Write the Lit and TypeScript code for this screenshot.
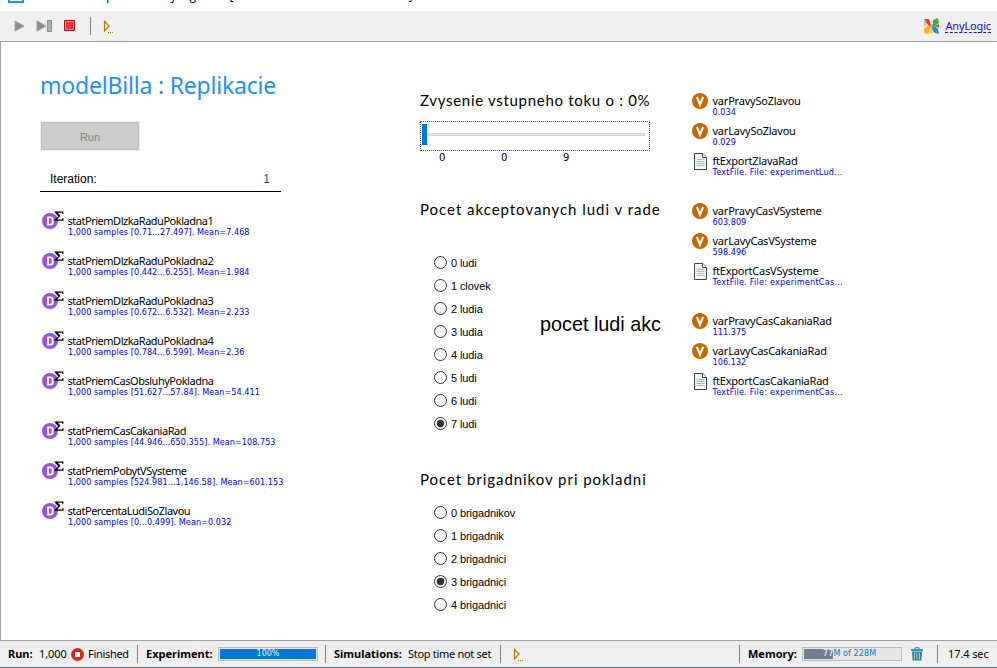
import { LitElement, html, svg, css } from "lit";
import { customElement, property } from "lit/decorators.js";

type Item = { kind: "stat" | "var" | "file"; name: string; value: string; gap?: boolean };

const STATS: Item[] = [
  { kind: "stat", name: "statPriemDlzkaRaduPokladna1", value: "1,000 samples [0.71...27.497]. Mean=7.468" },
  { kind: "stat", name: "statPriemDlzkaRaduPokladna2", value: "1,000 samples [0.442...6.255]. Mean=1.984" },
  { kind: "stat", name: "statPriemDlzkaRaduPokladna3", value: "1,000 samples [0.672...6.532]. Mean=2.233" },
  { kind: "stat", name: "statPriemDlzkaRaduPokladna4", value: "1,000 samples [0.784...6.599]. Mean=2.36" },
  { kind: "stat", name: "statPriemCasObsluhyPokladna", value: "1,000 samples [51.627...57.84]. Mean=54.411" },
  { kind: "stat", name: "statPriemCasCakaniaRad", value: "1,000 samples [44.946...650.355]. Mean=108.753", gap: true },
  { kind: "stat", name: "statPriemPobytVSysteme", value: "1,000 samples [524.981...1,146.58]. Mean=601.153" },
  { kind: "stat", name: "statPercentaLudiSoZlavou", value: "1,000 samples [0...0.499]. Mean=0.032" },
];

const VARS: Item[] = [
  { kind: "var", name: "varPravySoZlavou", value: "0.034" },
  { kind: "var", name: "varLavySoZlavou", value: "0.029" },
  { kind: "file", name: "ftExportZlavaRad", value: "TextFile. File: experimentLud..." },
  { kind: "var", name: "varPravyCasVSysteme", value: "603.809", gap: true },
  { kind: "var", name: "varLavyCasVSysteme", value: "598.496" },
  { kind: "file", name: "ftExportCasVSysteme", value: "TextFile. File: experimentCas..." },
  { kind: "var", name: "varPravyCasCakaniaRad", value: "111.375", gap: true },
  { kind: "var", name: "varLavyCasCakaniaRad", value: "106.132" },
  { kind: "file", name: "ftExportCasCakaniaRad", value: "TextFile. File: experimentCas..." },
];

const PEOPLE = ["0 ludi", "1 clovek", "2 ludia", "3 ludia", "4 ludia", "5 ludi", "6 ludi", "7 ludi"];
const HELPERS = ["0 brigadnikov", "1 brigadnik", "2 brigadnici", "3 brigadnici", "4 brigadnici"];

const consoleIcon = html`<svg width="11" height="13" viewBox="0 0 11 13">
  <path d="M1.5 1.3v9.4L6 6z" fill="#fff6d8" stroke="#b5761a" stroke-width="1.2" />
  <path d="M5 12.5h1M7 12.5h1M9 12.5h1" stroke="#b5761a" />
</svg>`;

const icons = {
  stat: svg`<circle cx="10" cy="13" r="8" fill="#9752e6"/>
    <path d="M7.9 9.4h2.5q2.3 0 2.3 2.3v2.6q0 2.3-2.3 2.3H7.9z" fill="none" stroke="#fff" stroke-width="1.9"/>
    <path d="M22.8 5.7V4.1H15.6l3.7 4-4 4h7.6v-1.8" fill="none" stroke="#000" stroke-width="1.3"/>
    <path d="M16 4.3l3.5 3.8" stroke="#000" stroke-width="2"/>`,
  var: svg`<circle cx="10" cy="13" r="8" fill="#cc6600"/>
    <path d="M6.9 8.9L10 16.6l3.1-7.7" fill="none" stroke="#fff" stroke-width="2.1"/>`,
  file: svg`<path d="M4.5 5.5h8.3l3.7 3.7v12.3h-12z" fill="#eef7fa" stroke="#3f464b"/>
    <path d="M12.5 5.5v4h4" fill="#fff" stroke="#3f464b"/>
    <path d="M6.5 11.5h8M6.5 13.5h8M6.5 15.5h8M6.5 17.5h8" stroke="#aebcc2"/>`,
};

@customElement("model-item")
class ModelItem extends LitElement {
  @property({ attribute: false }) item!: Item;
  static styles = css`
    :host { display: flex; font-family: "DejaVu Sans Condensed", "DejaVu Sans", sans-serif; font-stretch: condensed; white-space: nowrap; }
    svg { display: block; flex: none; width: 27px; height: 24px; }
    .var svg, .file svg { width: 22px; }
    .row { display: flex; }
    .text { padding: 6px 0 0 0.5px; }
    .name { font-family: "Noto Sans", sans-serif; font-size: 11px; line-height: 14px; color: #000; letter-spacing: -0.22px; }
    .stat .name { letter-spacing: -0.48px; }
    .value { font-size: 9px; line-height: 10px; margin-top: -1px; color: #0000ff; letter-spacing: 0.05px; }
    .stat .value { padding-left: 0.5px; }
    .file .value { letter-spacing: 0.24px; }
  `;
  render() {
    const i = this.item;
    const w = i.kind === "stat" ? 27 : 22;
    return html`<div class="row ${i.kind}">
      <svg viewBox="0 0 ${w} 24">${icons[i.kind]}</svg>
      <div class="text"><div class="name">${i.name}</div><div class="value">${i.value}</div></div>
    </div>`;
  }
}

@customElement("radio-list")
class RadioList extends LitElement {
  @property({ attribute: false }) options: string[] = [];
  @property({ type: Number }) selected = 0;
  static styles = css`
    :host { display: block; padding-left: 13px; }
    .opt { display: flex; align-items: center; gap: 3px; height: 23px; font: 11px "Liberation Sans", sans-serif; white-space: nowrap; letter-spacing: -0.1px; }
    svg { display: block; }
  `;
  render() {
    return this.options.map(
      (o, n) => html`<div class="opt">
        <svg width="15" height="15" viewBox="0 0 15 15">
          <circle cx="7.5" cy="7.5" r="6" fill="#fff" stroke="#333" />
          ${n === this.selected ? svg`<circle cx="7.5" cy="7.5" r="3.7" fill="#333"/>` : ""}
        </svg>
        <span>${o}</span>
      </div>`
    );
  }
}

@customElement("app-root")
class AppRoot extends LitElement {
  static styles = css`
    :host { display: flex; flex-direction: column; width: 997px; height: 668px; overflow: hidden; background: #fff; color: #000;
      font: 11px "Noto Sans", sans-serif; white-space: nowrap; }
    * { box-sizing: border-box; }
    svg { display: block; flex: none; }
    .caption { display: flex; align-items: flex-end; height: 11px; flex: none; overflow: hidden; }
    .caption .mark { width: 16px; height: 3px; margin: 0 3px 8px 8px; border: 1px solid #1a9ad6; border-width: 0 2px 2px; background: #e8f5fb; }
    .caption .name { font: 12px/16px "Open Sans", sans-serif; margin-bottom: 7px; letter-spacing: -0.21px; }
    .toolbar { display: flex; align-items: center; height: 30px; flex: none; background: #efefef; padding: 0 6px 0 14px; }
    .toolbar .sep { width: 1px; height: 18px; background: #808080; margin: 0 12px 0 14px; }
    .tools { display: flex; align-items: center; flex: 1; }
    .tools svg + svg { margin-left: 11px; }
    .tools svg + .stop { margin-left: 12px; }
    .brand { display: flex; align-items: center; gap: 5px; color: #1a0dcc; }
    .brand span { border-bottom: 1px dashed #1a0dcc; line-height: 11px; height: 13px; letter-spacing: -0.15px; }
    .canvas { display: flex; flex: none; height: 600px; border: 1px solid #a0a0a0; border-right: 0; background: #fff; }
    .left { width: 419px; padding: 27px 0 0 39px; }
    .middle { width: 270px; padding-top: 48px; }
    .right { padding-top: 46px; }
    h1 { margin: 0; font: 400 23px/32px "Noto Sans", sans-serif; letter-spacing: -0.2px; color: #1e90ff; }
    .run { display: flex; align-items: center; justify-content: center; width: 100px; height: 30px; margin-top: 20px; background: #ccc; border: 1px solid #efefef;
      box-shadow: inset 0 0 0 1px #bfbfbf; color: #838383; font: 11px "Liberation Sans", sans-serif; padding-top: 2px; }
    .iter { display: flex; justify-content: space-between; align-items: center; width: 241px; height: 26px; margin: 15px 0 0; padding: 0 11px 0 10px;
      border-bottom: 1px solid #000; font: 12px "Liberation Sans", sans-serif; }
    .iter b { font-weight: 400; color: #483d8b; }
    .stats { margin-top: 16px; }
    .stats model-item { height: 40px; }
    .stats .gap { margin-top: 10px; }
    .right model-item { height: 30px; }
    .right .gap { margin-top: 20px; }
    h2 { margin: 0; font: 400 15px/20px Lato, sans-serif; letter-spacing: 0.7px; }
    .slider { display: flex; align-items: flex-start; width: 230px; height: 30px; margin-top: 11px; border: 1px dotted #555; padding: 2px 4px 0 1px; }
    .thumb { width: 5px; height: 21px; background: #0078d7; }
    .track { flex: 1; height: 3px; margin-top: 9px; border: 1px solid #d6d6d6; background: #e7eaea; }
    .ticks { display: flex; height: 12px; padding-left: 19px; font: 10px/14px "DejaVu Sans", sans-serif; }
    .ticks span { width: 62px; }
    .h-people { margin-top: 36px; letter-spacing: 0.97px; }
    .people { display: flex; margin-top: 32px; height: 184px; }
    .people p { margin: 61px 0 0 49px; font: 19.8px/24px "Liberation Sans", sans-serif; }
    .people radio-list { width: 71px; flex: none; }
    .h-help { margin-top: 34px; letter-spacing: 0.95px; }
    .help { margin-top: 12px; }
    .status { display: flex; align-items: center; height: 27px; flex: none; background: #efefef; border-bottom: 1px solid #1883d7; padding-left: 8px; font-size: 11px; letter-spacing: -0.3px; }
    .status > span, .status > b { line-height: 16px; height: 16px; flex: none; }
    .status b { font-weight: 700; letter-spacing: 0; }
    .status i { width: 1px; height: 18px; background: #808080; flex: none; }
    .status .w-n, .status .sec { letter-spacing: -0.1px; }
    .bar { display: flex; align-items: center; justify-content: center; width: 100px; height: 14px; border: 1px solid #bcbcbc; padding: 1px; flex: none;
      font: 8px/10px "DejaVu Sans", sans-serif; letter-spacing: 0; }
    .bar.full { background: #0078d7; box-shadow: inset 0 0 0 1px #e6e6e6; color: #e4f0fa; }
    .bar.mem { justify-content: flex-start; padding-left: 20px; background: linear-gradient(90deg, #708090 30px, #e6e6e6 30px); color: #0078d7;
      box-shadow: inset 0 0 0 1px #e6e6e6; letter-spacing: 0.1px; }
    .bar.mem em { font-style: normal; color: #fff; }
    .w-run { width: 31px; } .w-n { width: 32px; } .w-fin { width: 49px; margin-left: 4px; }
    .w-exp { width: 72px; margin-left: 8px; } .w-sim { width: 74px; margin-left: 8px; } .w-stop { width: 92px; }
    .w-mem { width: 54px; margin-left: 8px; } .fill { flex: 1; }
    .pl { margin-left: 7px; } .con { margin-left: 12px; } .sec { width: 49px; margin-left: 10px; }
    .trash { margin: 0 14px 0 9px; }
  `;

  render() {
    return html`
      <div class="caption"><div class="mark"></div><div class="name">modelBilla : Replikacie - AnyLogic PLE [PERSONAL LEARNING USE ONLY]</div></div>
      <div class="toolbar">
        <div class="tools">
          <svg width="11" height="12" viewBox="0 0 11 12"><path d="M1 1v10l9-5z" fill="#8c8c8c" stroke="#a0a0a0" /></svg>
          <svg width="16" height="12" viewBox="0 0 16 12"><path d="M1 1v10l9-5z" fill="#8c8c8c" stroke="#a0a0a0" /><path d="M11.5 .5h4v11h-4z" fill="#adadad" stroke="#8c8c8c" /></svg>
          <svg class="stop" width="12" height="12" viewBox="0 0 12 12"><path d="M.5 .5h10v10h-10z" fill="#f0303c" stroke="#b41422" /><path d="M1.5 1.5h8v8h-8z" fill="none" stroke="#f58a90" /></svg>
          <div class="sep"></div>${consoleIcon}
        </div>
        <div class="brand">
          <svg width="17" height="17" viewBox="0 0 17 17">
            <path d="M1 1h5l3 5-1 3-4-3z" fill="#e8402c" /><path d="M1 1l3 5-3 3z" fill="#b9c4c4" />
            <path d="M10 2l5-2 1 5-4 3-3 1z" fill="#3ab04a" /><path d="M6 1l3 1 1 4-2 1z" fill="#eef0e8" />
            <path d="M1 11l4-4 3 2-3 7-4-1z" fill="#f9b21c" /><path d="M8 9l4-1 3 3 1 5-4-1-2-2z" fill="#2a8fd8" />
            <path d="M6 15l2-5 3 5z" fill="#f6dc2a" /><path d="M12 8l4-2v4z" fill="#e8402c" />
          </svg>
          <span>AnyLogic</span>
        </div>
      </div>
      <div class="canvas">
        <div class="left">
          <h1>modelBilla : Replikacie</h1>
          <div class="run">Run</div>
          <div class="iter"><span>Iteration:</span><b>1</b></div>
          <div class="stats">${STATS.map((s) => html`<model-item class=${s.gap ? "gap" : ""} .item=${s}></model-item>`)}</div>
        </div>
        <div class="middle">
          <h2>Zvysenie vstupneho toku o : 0%</h2>
          <div class="slider"><div class="thumb"></div><div class="track"></div></div>
          <div class="ticks"><span>0</span><span>0</span><span>9</span></div>
          <h2 class="h-people">Pocet akceptovanych ludi v rade</h2>
          <div class="people"><radio-list .options=${PEOPLE} selected="7"></radio-list><p>pocet ludi akc</p></div>
          <h2 class="h-help">Pocet brigadnikov pri pokladni</h2>
          <radio-list class="help" .options=${HELPERS} selected="3"></radio-list>
        </div>
        <div class="right">${VARS.map((s) => html`<model-item class=${s.gap ? "gap" : ""} .item=${s}></model-item>`)}</div>
      </div>
      <div class="status">
        <b class="w-run">Run:</b><span class="w-n">1,000</span>
        <svg width="13" height="13" viewBox="0 0 13 13"><circle cx="6.5" cy="6.5" r="6.5" fill="#dc2626" /><path d="M4 4h5v5H4z" fill="#fff" /></svg>
        <span class="w-fin">Finished</span><i></i>
        <b class="w-exp">Experiment:</b><div class="bar full">100%</div>
        <i class="pl"></i><b class="w-sim">Simulations:</b><span class="w-stop">Stop time not set</span><i></i>
        <div class="con">${consoleIcon}</div>
        <div class="fill"></div>
        <i></i><b class="w-mem">Memory:</b><div class="bar mem"><span><em>77</em>M of 228M</span></div>
        <svg class="trash" width="12" height="14" viewBox="0 0 12 14">
          <path d="M4 2V.7h4V2" fill="none" stroke="#2f7f9c" /><path d="M0 2h12v2H0z" fill="#3b8eac" />
          <path d="M1 4.5h10l-.7 9H1.7z" fill="#2f7f9c" /><path d="M3.5 5.5v7M6 5.5v7M8.5 5.5v7" stroke="#a9d4c4" />
        </svg>
        <i></i><span class="sec">17.4 sec</span>
      </div>
    `;
  }
}
